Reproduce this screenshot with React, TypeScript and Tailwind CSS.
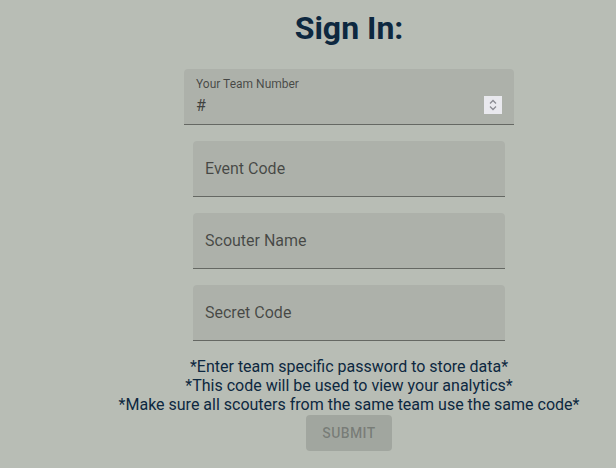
import React from "react";

function Field({ label }: { label: string }) {
  return (
    <div className="relative w-[312px] h-[56px] bg-[rgba(0,0,0,0.06)] rounded-t-[4px] border-b border-[rgba(0,0,0,0.42)] box-border">
      <span className="absolute left-[12px] top-[16px] text-[16px] leading-[23px] text-[rgba(0,0,0,0.6)]">
        {label}
      </span>
    </div>
  );
}

export default function App() {
  return (
    <div
      className="w-[616px] h-[468px] bg-[#b8bdb5] overflow-hidden"
      style={{ fontFamily: "Roboto, 'Liberation Sans', sans-serif" }}
    >
      <div className="pl-[82px] flex flex-col items-center">
        <h1 className="mt-[7px] text-[32px] leading-[42px] font-bold text-[#0d2840]">Sign In:</h1>
        <div className="mt-[20px] relative w-[330px] h-[56px] bg-[rgba(0,0,0,0.06)] rounded-t-[4px] border-b border-[rgba(0,0,0,0.42)] box-border">
          <span className="absolute left-[12px] top-[7px] text-[12px] leading-[17px] text-[rgba(0,0,0,0.6)]">
            Your Team Number
          </span>
          <span className="absolute left-[12px] top-[25px] text-[16px] leading-[23px] text-[rgba(0,0,0,0.65)]">
            #
          </span>
          <div className="absolute right-[12px] top-[27px] w-[18px] h-[18px] bg-[#e9e9ee] flex flex-col items-center justify-center gap-[2px]">
            <svg width="8" height="5" viewBox="0 0 8 5" fill="none">
              <path d="M1 4.5 L4 1.5 L7 4.5" stroke="#8b8c93" strokeWidth="1.3" />
            </svg>
            <svg width="8" height="5" viewBox="0 0 8 5" fill="none">
              <path d="M1 0.5 L4 3.5 L7 0.5" stroke="#8b8c93" strokeWidth="1.3" />
            </svg>
          </div>
        </div>
        <div className="mt-[16px] flex flex-col gap-[16px]">
          <Field label="Event Code" />
          <Field label="Scouter Name" />
          <Field label="Secret Code" />
        </div>
        <div className="mt-[16px] text-[16px] leading-[19px] text-[#0d2840] text-center">
          <p>*Enter team specific password to store data*</p>
          <p>*This code will be used to view your analytics*</p>
          <p>*Make sure all scouters from the same team use the same code*</p>
        </div>
        <button
          disabled
          className="mt-[1px] h-[36px] px-[16px] rounded-[4px] bg-[rgba(0,0,0,0.12)] text-[rgba(0,0,0,0.26)] text-[14px] font-medium tracking-[0.4px] uppercase leading-[24px]"
        >
          Submit
        </button>
      </div>
    </div>
  );
}
